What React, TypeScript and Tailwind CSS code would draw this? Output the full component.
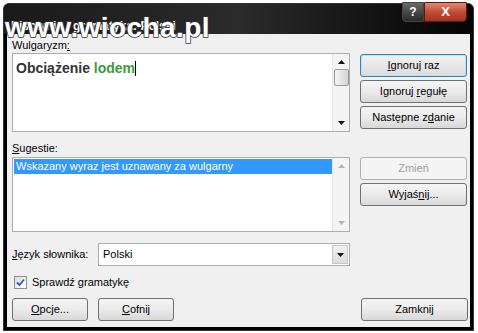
import React from "react";

const font = { fontFamily: '"Liberation Sans", Arial, sans-serif' };

function Btn({ children, focused, disabled, className = "" }: { children: React.ReactNode; focused?: boolean; disabled?: boolean; className?: string }) {
  const base = "flex items-center justify-center h-[23px] rounded-[3px] text-[11px] ";
  if (disabled)
    return <div className={base + "border border-[#adb2b5] bg-[#f4f4f4] text-[#a0a0a0] " + className}>{children}</div>;
  if (focused)
    return (
      <div className={base + "border border-[#3c7fb1] bg-gradient-to-b from-[#f2f2f2] to-[#dcdcdc] text-black shadow-[inset_0_0_0_1px_#b8e4f8] " + className}>
        {children}
      </div>
    );
  return <div className={base + "border border-[#707070] bg-gradient-to-b from-[#f4f4f4] via-[#ebebeb] to-[#d8d8d8] text-black " + className}>{children}</div>;
}

function Arrow({ up, dim }: { up?: boolean; dim?: boolean }) {
  return (
    <svg width="7" height="4" viewBox="0 0 7 4">
      <path d={up ? "M0 4 L3.5 0 L7 4Z" : "M0 0 L7 0 L3.5 4Z"} fill={dim ? "#b5b5b5" : "#111"} />
    </svg>
  );
}

function ScrollBar({ thumb, dim }: { thumb?: boolean; dim?: boolean }) {
  return (
    <div className="w-[17px] h-full flex flex-col items-center justify-between bg-[#f4f4f4] border-l border-[#e6e6e6] py-[6px]">
      <div className="flex flex-col items-center gap-[5px]">
        <Arrow up dim={dim} />
        {thumb && <div className="w-[15px] h-[17px] rounded-[2px] border border-[#9a9a9a] bg-gradient-to-r from-[#f3f3f3] to-[#d6d6d6]" />}
      </div>
      <Arrow dim={dim} />
    </div>
  );
}

export default function App() {
  return (
    <div className="w-[478px] h-[333px] bg-white relative overflow-hidden" style={font}>
      <div className="ml-[3px] mt-[3px] w-[471px] h-[328px] bg-black rounded-t-[6px] flex flex-col border border-[#333]">
        {/* title bar */}
        <div className="h-[30px] flex items-start justify-between bg-gradient-to-r from-[#1a1a1a] via-[#2b2b2b] to-[#050505] rounded-t-[6px]">
          <div className="text-white text-[12px] font-bold pl-[7px] pt-[13px]">Pisownia i gramatyka: Polski</div>
          <div className="flex mr-[6px] -mt-[2px]">
            <div className="w-[22px] h-[20px] rounded-bl-[4px] border border-[#444] bg-gradient-to-b from-[#6a6a6a] to-[#2a2a2a] text-white text-[12px] font-bold flex items-center justify-center">?</div>
            <div className="w-[43px] h-[20px] rounded-br-[4px] border border-[#5a1a10] bg-gradient-to-b from-[#dc8a78] via-[#c24a34] to-[#a33420] text-white text-[13px] font-bold flex items-center justify-center">X</div>
          </div>
        </div>
        {/* body */}
        <div className="flex-1 mx-[3px] mb-[3px] bg-[#f0f0f0] pl-[5px] pr-[2px] pt-[5px] text-[11px] text-black flex flex-col">
          <div className="leading-[13px]">
            Wulgaryzm<span className="underline">:</span>
          </div>
          <div className="flex gap-[10px] mt-[1px]">
            <div className="w-[338px] h-[79px] border border-[#abadb3] bg-white flex">
              <div className="flex-1 pl-[3px] pt-[5px] text-[14px] font-bold text-[#333] leading-[18px]">
                Obciążenie <span className="text-[#3d9a3d]">lodem</span>
                <span className="inline-block w-px h-[15px] bg-black align-middle -mt-[2px]" />
              </div>
              <ScrollBar thumb />
            </div>
            <div className="w-[107px] flex flex-col gap-[3px] pt-[1px]">
              <Btn focused>
                <span><span className="underline">I</span>gnoruj raz</span>
              </Btn>
              <Btn>
                <span>Ignoruj <span className="underline">r</span>egułę</span>
              </Btn>
              <Btn>
                <span>Następne z<span className="underline">d</span>anie</span>
              </Btn>
            </div>
          </div>
          <div className="leading-[13px] mt-[10px]">
            <span className="underline">S</span>ugestie:
          </div>
          <div className="flex gap-[10px] mt-[2px]">
            <div className="w-[338px] h-[75px] border border-[#abadb3] bg-white flex">
              <div className="flex-1 pt-px pl-px">
                <div className="h-[15px] bg-[#3399ff] text-white leading-[15px] pl-[2px]">Wskazany wyraz jest uznawany za wulgarny</div>
              </div>
              <ScrollBar dim />
            </div>
            <div className="w-[107px] flex flex-col gap-[3px]">
              <Btn disabled>Zmień</Btn>
              <Btn>
                <span>Wyjaś<span className="underline">n</span>ij...</span>
              </Btn>
            </div>
          </div>
          <div className="flex items-center mt-[11px]">
            <div className="w-[86px]">
              <span className="underline">J</span>ęzyk słownika:
            </div>
            <div className="w-[252px] h-[23px] border border-[#abadb3] bg-white flex items-center justify-between pl-[4px] pr-px">
              <span>Polski</span>
              <div className="w-[16px] h-[19px] border border-[#c8c8c8] bg-gradient-to-b from-[#f2f2f2] to-[#dcdcdc] flex items-center justify-center">
                <Arrow />
              </div>
            </div>
          </div>
          <div className="flex items-center gap-[5px] mt-[10px] ml-[2px] h-[13px]">
            <div className="w-[13px] h-[13px] border border-[#8e8f8f] bg-gradient-to-br from-[#dcdcdc] to-white flex items-center justify-center">
              <svg width="9" height="9" viewBox="0 0 9 9">
                <path d="M1 4.5 L3.5 7 L8 1.5" stroke="#3a5ab0" strokeWidth="1.8" fill="none" />
              </svg>
            </div>
            <span>
              Sprawdź <span className="underline">g</span>ramatykę
            </span>
          </div>
          <div className="flex mt-[9px]">
            <Btn className="w-[76px]">
              <span><span className="underline">O</span>pcje...</span>
            </Btn>
            <Btn className="w-[76px] ml-[10px]">
              <span><span className="underline">C</span>ofnij</span>
            </Btn>
            <Btn className="w-[107px] ml-auto">Zamknij</Btn>
          </div>
        </div>
      </div>
      {/* watermark */}
      <div className="absolute left-[5px] top-[13px] text-white font-bold text-[28px] leading-[30px] tracking-[0.4px] [-webkit-text-stroke:1.5px_#333] [paint-order:stroke_fill]">
        www.wiocha.pl
      </div>
    </div>
  );
}
